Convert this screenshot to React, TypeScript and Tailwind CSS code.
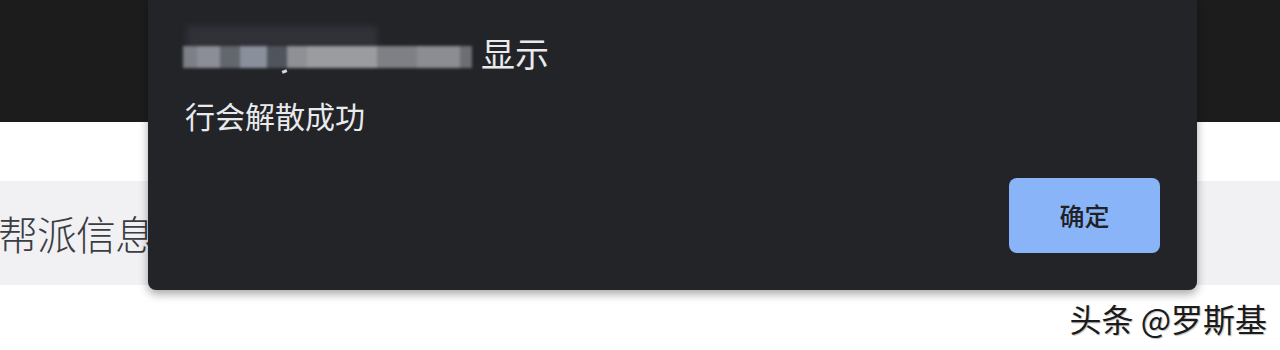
import React from 'react'

// blurred-out site name in the dialog title (pixelated mosaic in the reference)
const mosaic = [
  { w: 14, c: '#7d7f86' },
  { w: 23, c: '#8b8e96' },
  { w: 20, c: '#62666d' },
  { w: 27, c: '#8a8f9c' },
  { w: 20, c: '#50545c' },
  { w: 20, c: '#8f9096' },
  { w: 70, c: '#9b9ca0' },
  { w: 40, c: '#7f8086' },
  { w: 43, c: '#8c8d92' },
  { w: 12, c: '#6d6e73' },
]

function BlurredName() {
  return (
    <div className="relative w-[290px] h-[46px] mr-[8px] mt-[-8px]">
      <div className="absolute left-[4px] top-0 w-[190px] h-[22px] bg-[#313238] blur-[3px]" />
      <div className="absolute left-0 top-[20px] flex h-[22px] blur-[1.5px]">
        {mosaic.map((m, i) => (
          <div key={i} style={{ width: m.w, background: m.c }} />
        ))}
      </div>
      <div className="absolute left-[99px] top-[44px] w-[5px] h-[3px] bg-[#d8d8d8] blur-[0.5px] rotate-[-20deg]" />
    </div>
  )
}

export default function App() {
  return (
    <div className="relative w-[1280px] h-[350px] overflow-hidden bg-white font-['Noto_Sans_CJK_SC',sans-serif]">
      {/* page behind the alert */}
      <div className="h-[122px] bg-[#1c1c1d]" />
      <div className="h-[59px] bg-white" />
      <div className="h-[104px] bg-[#f1f1f3] flex items-center">
        <span className="text-[40px] leading-[44px] text-[#3a3d44] font-light tracking-[-1px] ml-[-2px]">帮派信息</span>
      </div>

      {/* alert dialog */}
      <div className="absolute left-[148px] top-0 w-[1049px] h-[290px] bg-[#232428] rounded-b-[8px] shadow-[0_4px_10px_rgba(0,0,0,0.35)] flex flex-col">
        <div className="flex items-center pl-[35px] pt-[33px]">
          <BlurredName />
          <span className="text-[34px] leading-[40px] text-[#e8eaed]">显示</span>
        </div>
        <p className="pl-[37px] mt-[25px] text-[30px] leading-[34px] text-[#e8eaed]">行会解散成功</p>
        <div className="mt-auto flex justify-end pr-[37px] pb-[37px]">
          <button className="w-[151px] h-[75px] rounded-[8px] bg-[#8ab4f8] text-[25px] text-[#202124] font-medium">
            确定
          </button>
        </div>
      </div>

      {/* watermark */}
      <div className="absolute right-[13px] top-[298px] text-[32px] leading-[40px] text-[#1b1b1b] [text-shadow:1px_1px_1px_rgba(0,0,0,0.25)]">
        头条 @罗斯基
      </div>
    </div>
  )
}
